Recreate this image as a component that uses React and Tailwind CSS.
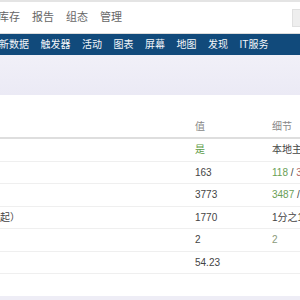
import React from "react";

const topMenu = ["库存", "报告", "组态", "管理"];
const subMenu = ["新数据", "触发器", "活动", "图表", "屏幕", "地图", "发现", "IT服务"];

const rows = [
  { label: "", value: <span className="text-[#5b9a45]">是</span>, detail: <span>本地主机:10051</span> },
  {
    label: "",
    value: "163",
    detail: (
      <span>
        <span className="text-[#6aa055]">118</span> / <span className="text-[#b06a6a]">3</span> / 42
      </span>
    ),
  },
  {
    label: "",
    value: "3773",
    detail: (
      <span>
        <span className="text-[#6aa055]">3487</span> / 260 / 26
      </span>
    ),
  },
  { label: "起）", value: "1770", detail: <span>1分之1</span> },
  { label: "", value: "2", detail: <span className="text-[#8a9a7a]">2</span> },
  { label: "", value: "54.23", detail: "" },
];

export default function App() {
  return (
    <div className="w-[300px] h-[300px] overflow-hidden bg-[#eeedf6] font-['Liberation_Sans','Noto_Sans_CJK_SC',sans-serif]">
      {/* top menu */}
      <div className="h-[34px] bg-white border-t-2 border-[#e4e4e4] border-b border-b-[#dcdcdc] flex items-center">
        <div className="flex gap-[12px] -ml-[2px] text-[11px] text-[#666]">
          {topMenu.map((m) => (
            <span key={m}>{m}</span>
          ))}
        </div>
        <div className="ml-auto mr-[-20px] w-[28px] h-[18px] bg-[#eeeeee] border border-[#e0e0e0]" />
      </div>

      {/* sub menu */}
      <div className="h-[21px] bg-[#114a7b] flex items-center">
        <div className="flex gap-[11.5px] -ml-[1px] text-[10px] text-[#f4f6fa]">
          {subMenu.map((m) => (
            <span key={m}>{m}</span>
          ))}
        </div>
      </div>

      {/* page head */}
      <div className="h-[40px] bg-[linear-gradient(#f1f0f8,#ebeaf5)]" />

      {/* table */}
      <div className="bg-white h-[201px] text-[10px] text-[#444]">
        <div className="h-[21px]" />
        <div className="flex h-[23px] items-center border-b-2 border-[#dedede] text-[#888]">
          <div className="w-[195px]" />
          <div className="w-[77px]">值</div>
          <div className="flex-1">细节</div>
        </div>
        {rows.map((r, i) => (
          <div key={i} className="flex h-[22.5px] items-center border-b border-[#efefef] whitespace-nowrap overflow-hidden">
            <div className="w-[195px]">{r.label}</div>
            <div className="w-[77px]">{r.value}</div>
            <div className="flex-1 overflow-hidden">{r.detail}</div>
          </div>
        ))}
      </div>
    </div>
  );
}
